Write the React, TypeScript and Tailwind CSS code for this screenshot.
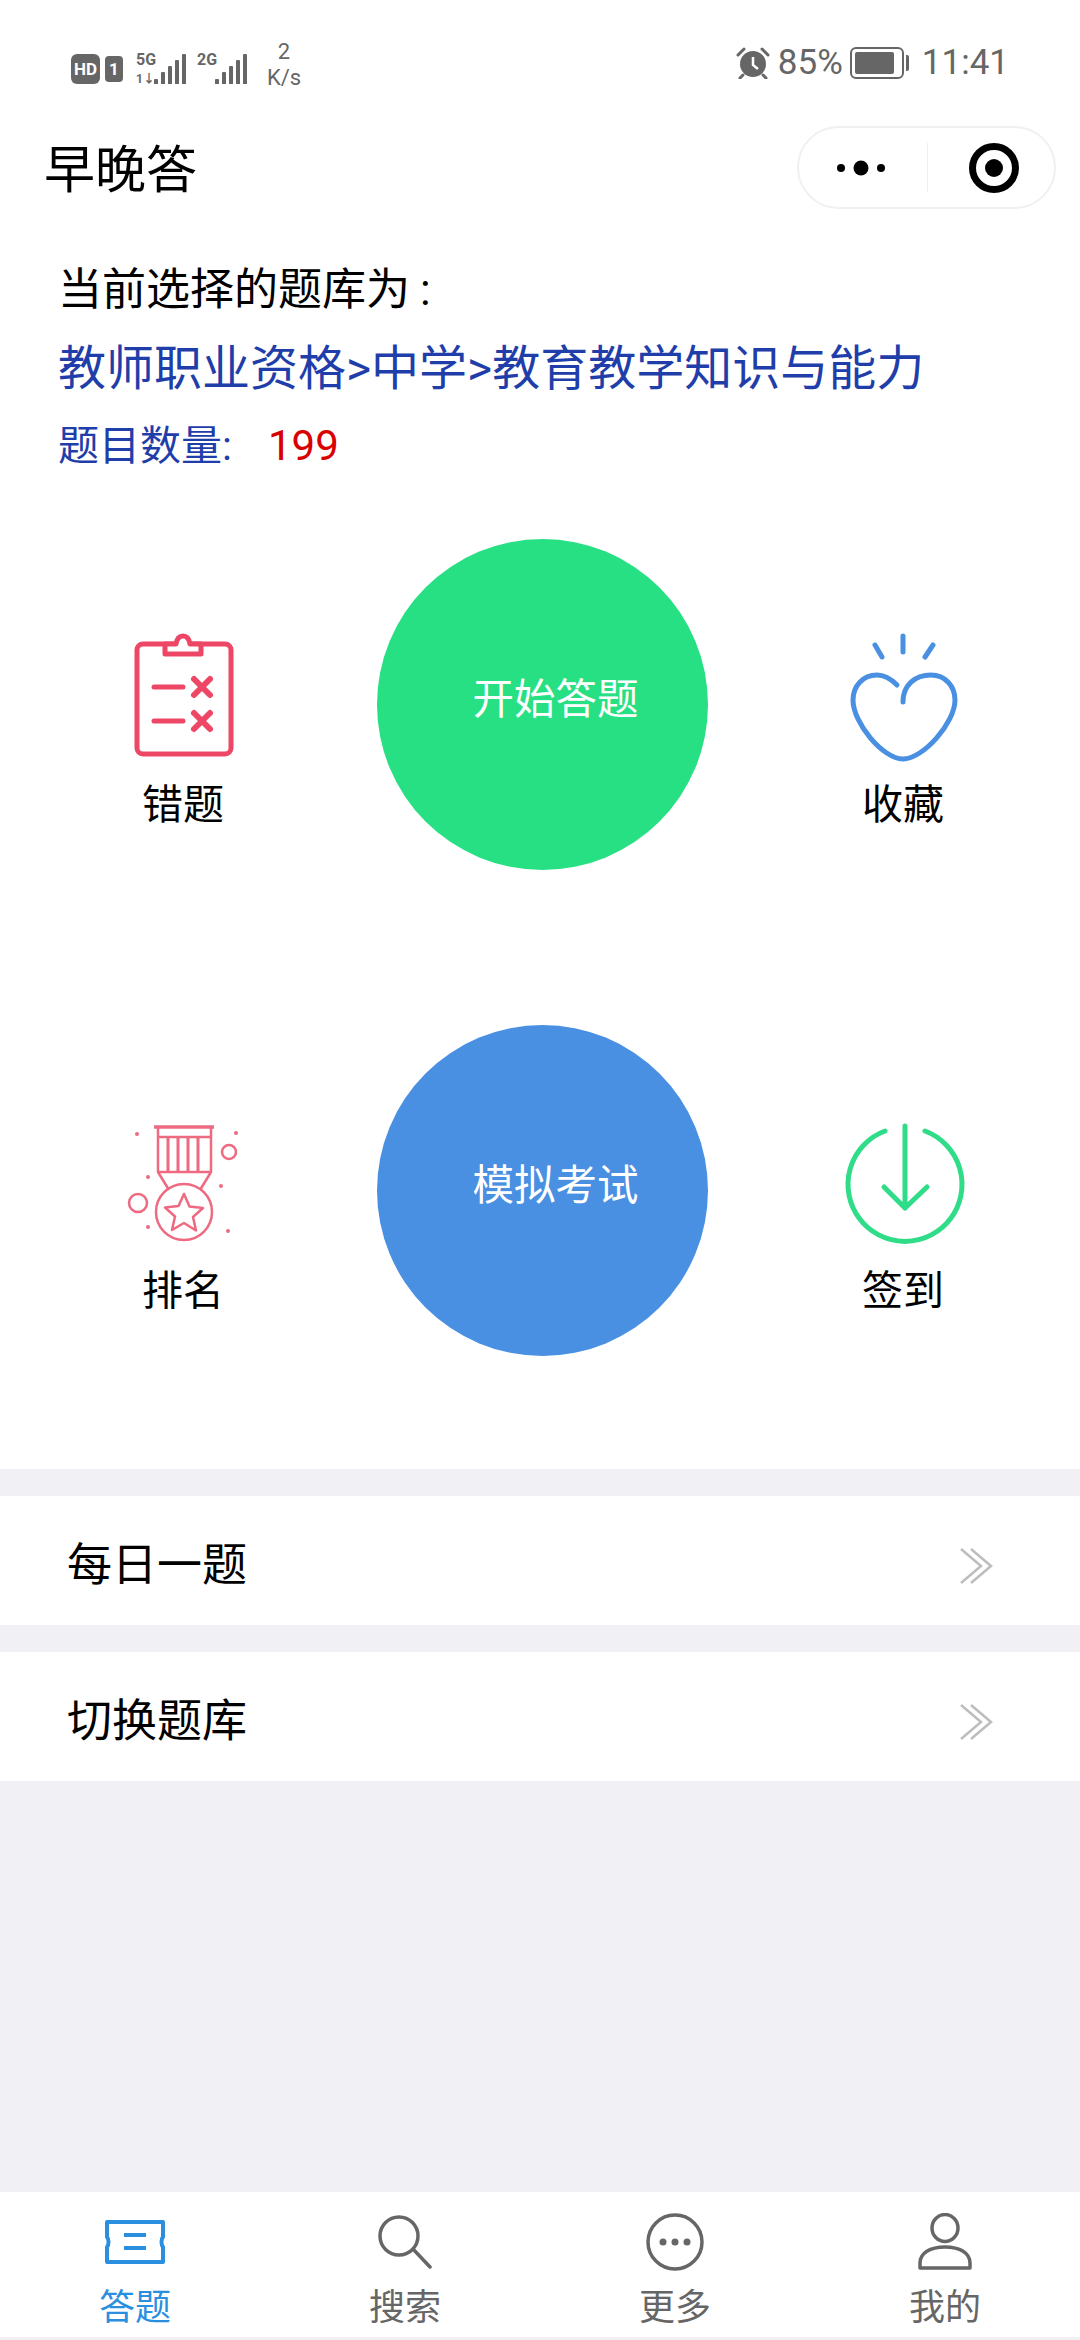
import React from 'react';

const font = { fontFamily: 'Roboto, "Noto Sans CJK SC", sans-serif' };

function SignalBars({ heights }: { heights: number[] }) {
  return (
    <div className="flex items-end gap-[3px]">
      {heights.map((h, i) => (
        <div key={i} className="w-[4px] rounded-t-[1px] bg-[#666666]" style={{ height: h }} />
      ))}
    </div>
  );
}

function StatusBar() {
  return (
    <div className="flex h-[125px] items-start justify-between pl-[71px] pr-[71px] pt-[47px] text-[#666666]">
      <div className="flex items-center">
        <div className="flex h-[30px] w-[29px] items-center justify-center rounded-[6px] bg-[#666666] text-[17px] font-bold leading-none text-white">
          HD
        </div>
        <div className="ml-[5px] flex h-[26px] w-[18px] items-center justify-center rounded-[4px] bg-[#666666] text-[17px] font-bold leading-none text-white">
          1
        </div>
        <div className="relative ml-[13px] h-[30px] w-[50px]">
          <span className="absolute left-0 top-[-2px] text-[16px] font-bold leading-[16px]">5G</span>
          <span className="absolute bottom-[-1px] left-0 text-[12px] font-bold leading-[12px]">1↓</span>
          <div className="absolute bottom-0 right-0">
            <SignalBars heights={[5, 12, 18, 24, 30]} />
          </div>
        </div>
        <div className="relative ml-[11px] h-[30px] w-[50px]">
          <span className="absolute left-0 top-[-2px] text-[16px] font-bold leading-[16px]">2G</span>
          <div className="absolute bottom-0 right-0">
            <SignalBars heights={[5, 12, 18, 24, 30]} />
          </div>
        </div>
        <div className="ml-[20px] flex w-[34px] flex-col items-center text-[22px] leading-[26px]">
          <span className="mt-[-8px]">2</span>
          <span>K/s</span>
        </div>
      </div>
      <div className="flex items-center">
        <svg width="36" height="32" viewBox="0 0 36 32">
          <circle cx="18" cy="17" r="13" fill="#666666" />
          <path d="M18 10v8l5 4" fill="none" stroke="#ffffff" strokeWidth="2.5" />
          <path d="M3 8l6-6M33 8l-6-6M8 28l-3 3M28 28l3 3" stroke="#666666" strokeWidth="3" strokeLinecap="round" />
        </svg>
        <span className="ml-[7px] text-[35px] leading-[30px]">85%</span>
        <div className="ml-[7px] flex items-center">
          <div className="flex h-[32px] w-[54px] items-center rounded-[6px] border-[2px] border-[#666666] p-[3px]">
            <div className="h-full w-[88%] rounded-[2px] bg-[#666666]" />
          </div>
          <div className="ml-[2px] h-[16px] w-[3px] rounded-r-[2px] bg-[#666666]" />
        </div>
        <span className="ml-[13px] text-[35px] leading-[30px]">11:41</span>
      </div>
    </div>
  );
}

function Capsule() {
  return (
    <div className="mr-[24px] flex h-[83px] w-[259px] items-center rounded-full border-[2px] border-[#f0f0f0] bg-white">
      <svg className="ml-[35px]" width="54" height="20" viewBox="0 0 54 20">
        <circle cx="7" cy="10" r="4" fill="#000000" />
        <circle cx="27" cy="10" r="7.5" fill="#000000" />
        <circle cx="47" cy="10" r="4" fill="#000000" />
      </svg>
      <div className="ml-[39px] h-[49px] w-px bg-[#eeeeee]" />
      <svg className="ml-[41px]" width="50" height="50" viewBox="0 0 50 50">
        <circle cx="25" cy="25" r="21.5" fill="none" stroke="#000000" strokeWidth="7" />
        <circle cx="25" cy="25" r="9" fill="#000000" />
      </svg>
    </div>
  );
}

function ClipboardIcon() {
  return (
    <svg width="144" height="144" viewBox="0 0 144 144" fill="none" stroke="#ee4766" strokeWidth="5" strokeLinejoin="round">
      <rect x="26" y="11" width="94" height="110" rx="6" />
      <path d="M54 11h11c1-6 4-8 7-8s6 2 7 8h11v10H54z" fill="#ffffff" />
      <path d="M43 54h29M43 88h29" strokeLinecap="round" />
      <path d="M83 46l16 16M99 46L83 62M83 80l16 16M99 80L83 96" strokeWidth="6" strokeLinecap="round" />
    </svg>
  );
}

function HeartIcon() {
  return (
    <svg width="144" height="144" viewBox="0 0 144 144" fill="none" stroke="#4a90e2" strokeWidth="5" strokeLinecap="round">
      <path d="M72 3v16M44 12l7 12M102 12l-8 12" />
      <path d="M66 52C60 46 53 42 46 42 32 42 22 53 22 67 22 90 52 126 72 126 92 126 124 90 124 67 124 53 114 42 100 42 84 42 72 52 72 69" />
    </svg>
  );
}

function MedalIcon() {
  return (
    <svg width="144" height="144" viewBox="0 0 144 144" fill="none" stroke="#ee6a80" strokeWidth="2.5" strokeLinejoin="round">
      <path d="M43 8h60" strokeWidth="3.5" />
      <path d="M47 8v45h53V8M47 18h53" />
      <path d="M57 18v35M67 18v35M77 18v35M87 18v35" strokeWidth="3" />
      <path d="M47 53l11 18M100 53L89 71" />
      <circle cx="73" cy="93" r="28" />
      <path d="M73 75l5.5 12.5 13.5 1.5-10 9 3 13.5L73 104l-12 7 3-13.5-10-9 13.5-1.5z" />
      <circle cx="27" cy="84" r="9" />
      <circle cx="118" cy="33" r="7" />
      <g fill="#ee6a80" stroke="none">
        <circle cx="26" cy="15" r="2" />
        <circle cx="125" cy="14" r="2" />
        <circle cx="37" cy="58" r="2" />
        <circle cx="110" cy="67" r="2" />
        <circle cx="37" cy="108" r="2" />
        <circle cx="117" cy="112" r="2" />
      </g>
    </svg>
  );
}

function DownloadIcon() {
  return (
    <svg width="144" height="144" viewBox="0 0 144 144" fill="none" stroke="#2fdc88" strokeWidth="5" strokeLinecap="round" strokeLinejoin="round">
      <path d="M54 12A57 57 0 1 0 94 12" />
      <path d="M74 7v82M53 68l21 21 22-21" />
    </svg>
  );
}

function SideItem({ icon, label }: { icon: React.ReactNode; label: string }) {
  return (
    <div className="flex flex-col items-center pt-[94px]">
      {icon}
      <span className="mt-[3px] text-[41px] leading-[50px] text-black">{label}</span>
    </div>
  );
}

function BigCircle({ label, color }: { label: string; color: string }) {
  return (
    <div className={`flex h-[331px] w-[331px] items-center justify-center rounded-full pb-[9px] pl-[26px] text-[41.5px] text-white ${color}`}>
      {label}
    </div>
  );
}

function ActionRow({ left, right, center }: { left: React.ReactNode; right: React.ReactNode; center: React.ReactNode }) {
  return (
    <div className="flex h-[331px] items-start">
      <div className="flex w-[366px] justify-center">{left}</div>
      <div className="ml-[11px]">{center}</div>
      <div className="ml-[18px] flex w-[354px] justify-center">{right}</div>
    </div>
  );
}

function DoubleChevron() {
  return (
    <svg width="33" height="36" viewBox="0 0 33 36" fill="none" stroke="#bdbdbd" strokeWidth="2.5">
      <path d="M1 1l20 17L1 35M11 1l20 17-20 17" />
    </svg>
  );
}

function ListRow({ label }: { label: string }) {
  return (
    <div className="flex h-[129px] items-center justify-between bg-white pl-[67px] pr-[87px] pt-[10px] text-[45px] text-black">
      <span>{label}</span>
      <DoubleChevron />
    </div>
  );
}

function TabItem({ label, active, icon }: { label: string; active?: boolean; icon: React.ReactNode }) {
  return (
    <div className={`flex flex-1 flex-col items-center ${active ? 'text-[#2b8fe0]' : 'text-[#666666]'}`}>
      <div className="flex h-[60px] items-center justify-center">{icon}</div>
      <span className="mt-[11px] text-[36px] leading-[50px]">{label}</span>
    </div>
  );
}

export default function App() {
  return (
    <div className="flex h-[2340px] w-[1080px] flex-col overflow-hidden bg-[#f0f0f5]" style={font}>
      <div className="bg-white">
        <StatusBar />
        <div className="flex h-[85px] items-center justify-between pl-[44px]">
          <span className="pt-[5px] text-[51px] leading-none text-black">早晚答</span>
          <Capsule />
        </div>
        <div className="pl-[58px] pt-[41px]">
          <div className="text-[44px] leading-[78px] text-black">
            当前选择的题库为<span className="ml-[10px]">:</span>
          </div>
          <div className="pt-[2px] text-[48px] leading-[76px] text-[#1f3eaa]">教师职业资格&gt;中学&gt;教育教学知识与能力</div>
          <div className="flex text-[41px] leading-[78px] text-[#1f3eaa]">
            <span className="w-[210px]">题目数量:</span>
            <span className="text-[42px] text-[#d90000]">199</span>
          </div>
        </div>
        <div className="flex flex-col gap-[155px] pb-[113px] pt-[54px]">
          <ActionRow
            left={<SideItem icon={<ClipboardIcon />} label="错题" />}
            center={<BigCircle label="开始答题" color="bg-[#27e083]" />}
            right={<SideItem icon={<HeartIcon />} label="收藏" />}
          />
          <ActionRow
            left={<SideItem icon={<MedalIcon />} label="排名" />}
            center={<BigCircle label="模拟考试" color="bg-[#4a90e2]" />}
            right={<SideItem icon={<DownloadIcon />} label="签到" />}
          />
        </div>
      </div>

      <div className="mt-[27px] flex flex-col gap-[27px]">
        <ListRow label="每日一题" />
        <ListRow label="切换题库" />
      </div>

      <div className="flex-1" />

      <div className="mb-[3px] flex h-[145px] bg-white pt-[20px]">
        <TabItem
          active
          label="答题"
          icon={
            <svg width="60" height="44" viewBox="0 0 60 44" fill="none" stroke="currentColor" strokeWidth="4">
              <path d="M2 2h56v15c-2 2-2 8 0 10v15H2V27c2-2 2-8 0-10z" strokeLinejoin="round" />
              <path d="M19 15h22M19 28h22" />
            </svg>
          }
        />
        <TabItem
          label="搜索"
          icon={
            <svg width="54" height="54" viewBox="0 0 54 54" fill="none" stroke="currentColor" strokeWidth="3.5" strokeLinecap="round">
              <circle cx="21" cy="21" r="19" />
              <path d="M35 34l17 18" />
            </svg>
          }
        />
        <TabItem
          label="更多"
          icon={
            <svg width="58" height="58" viewBox="0 0 58 58" fill="none" stroke="currentColor" strokeWidth="3.5">
              <circle cx="29" cy="29" r="27" />
              <g fill="currentColor" stroke="none">
                <circle cx="17" cy="29" r="3.5" />
                <circle cx="29" cy="29" r="3.5" />
                <circle cx="41" cy="29" r="3.5" />
              </g>
            </svg>
          }
        />
        <TabItem
          label="我的"
          icon={
            <svg width="54" height="58" viewBox="0 0 54 58" fill="none" stroke="currentColor" strokeWidth="3.5">
              <ellipse cx="27" cy="15" rx="13" ry="13.5" />
              <path d="M2 55v-5c0-10 10-16 25-16s25 6 25 16v5z" strokeLinejoin="round" />
            </svg>
          }
        />
      </div>
    </div>
  );
}
